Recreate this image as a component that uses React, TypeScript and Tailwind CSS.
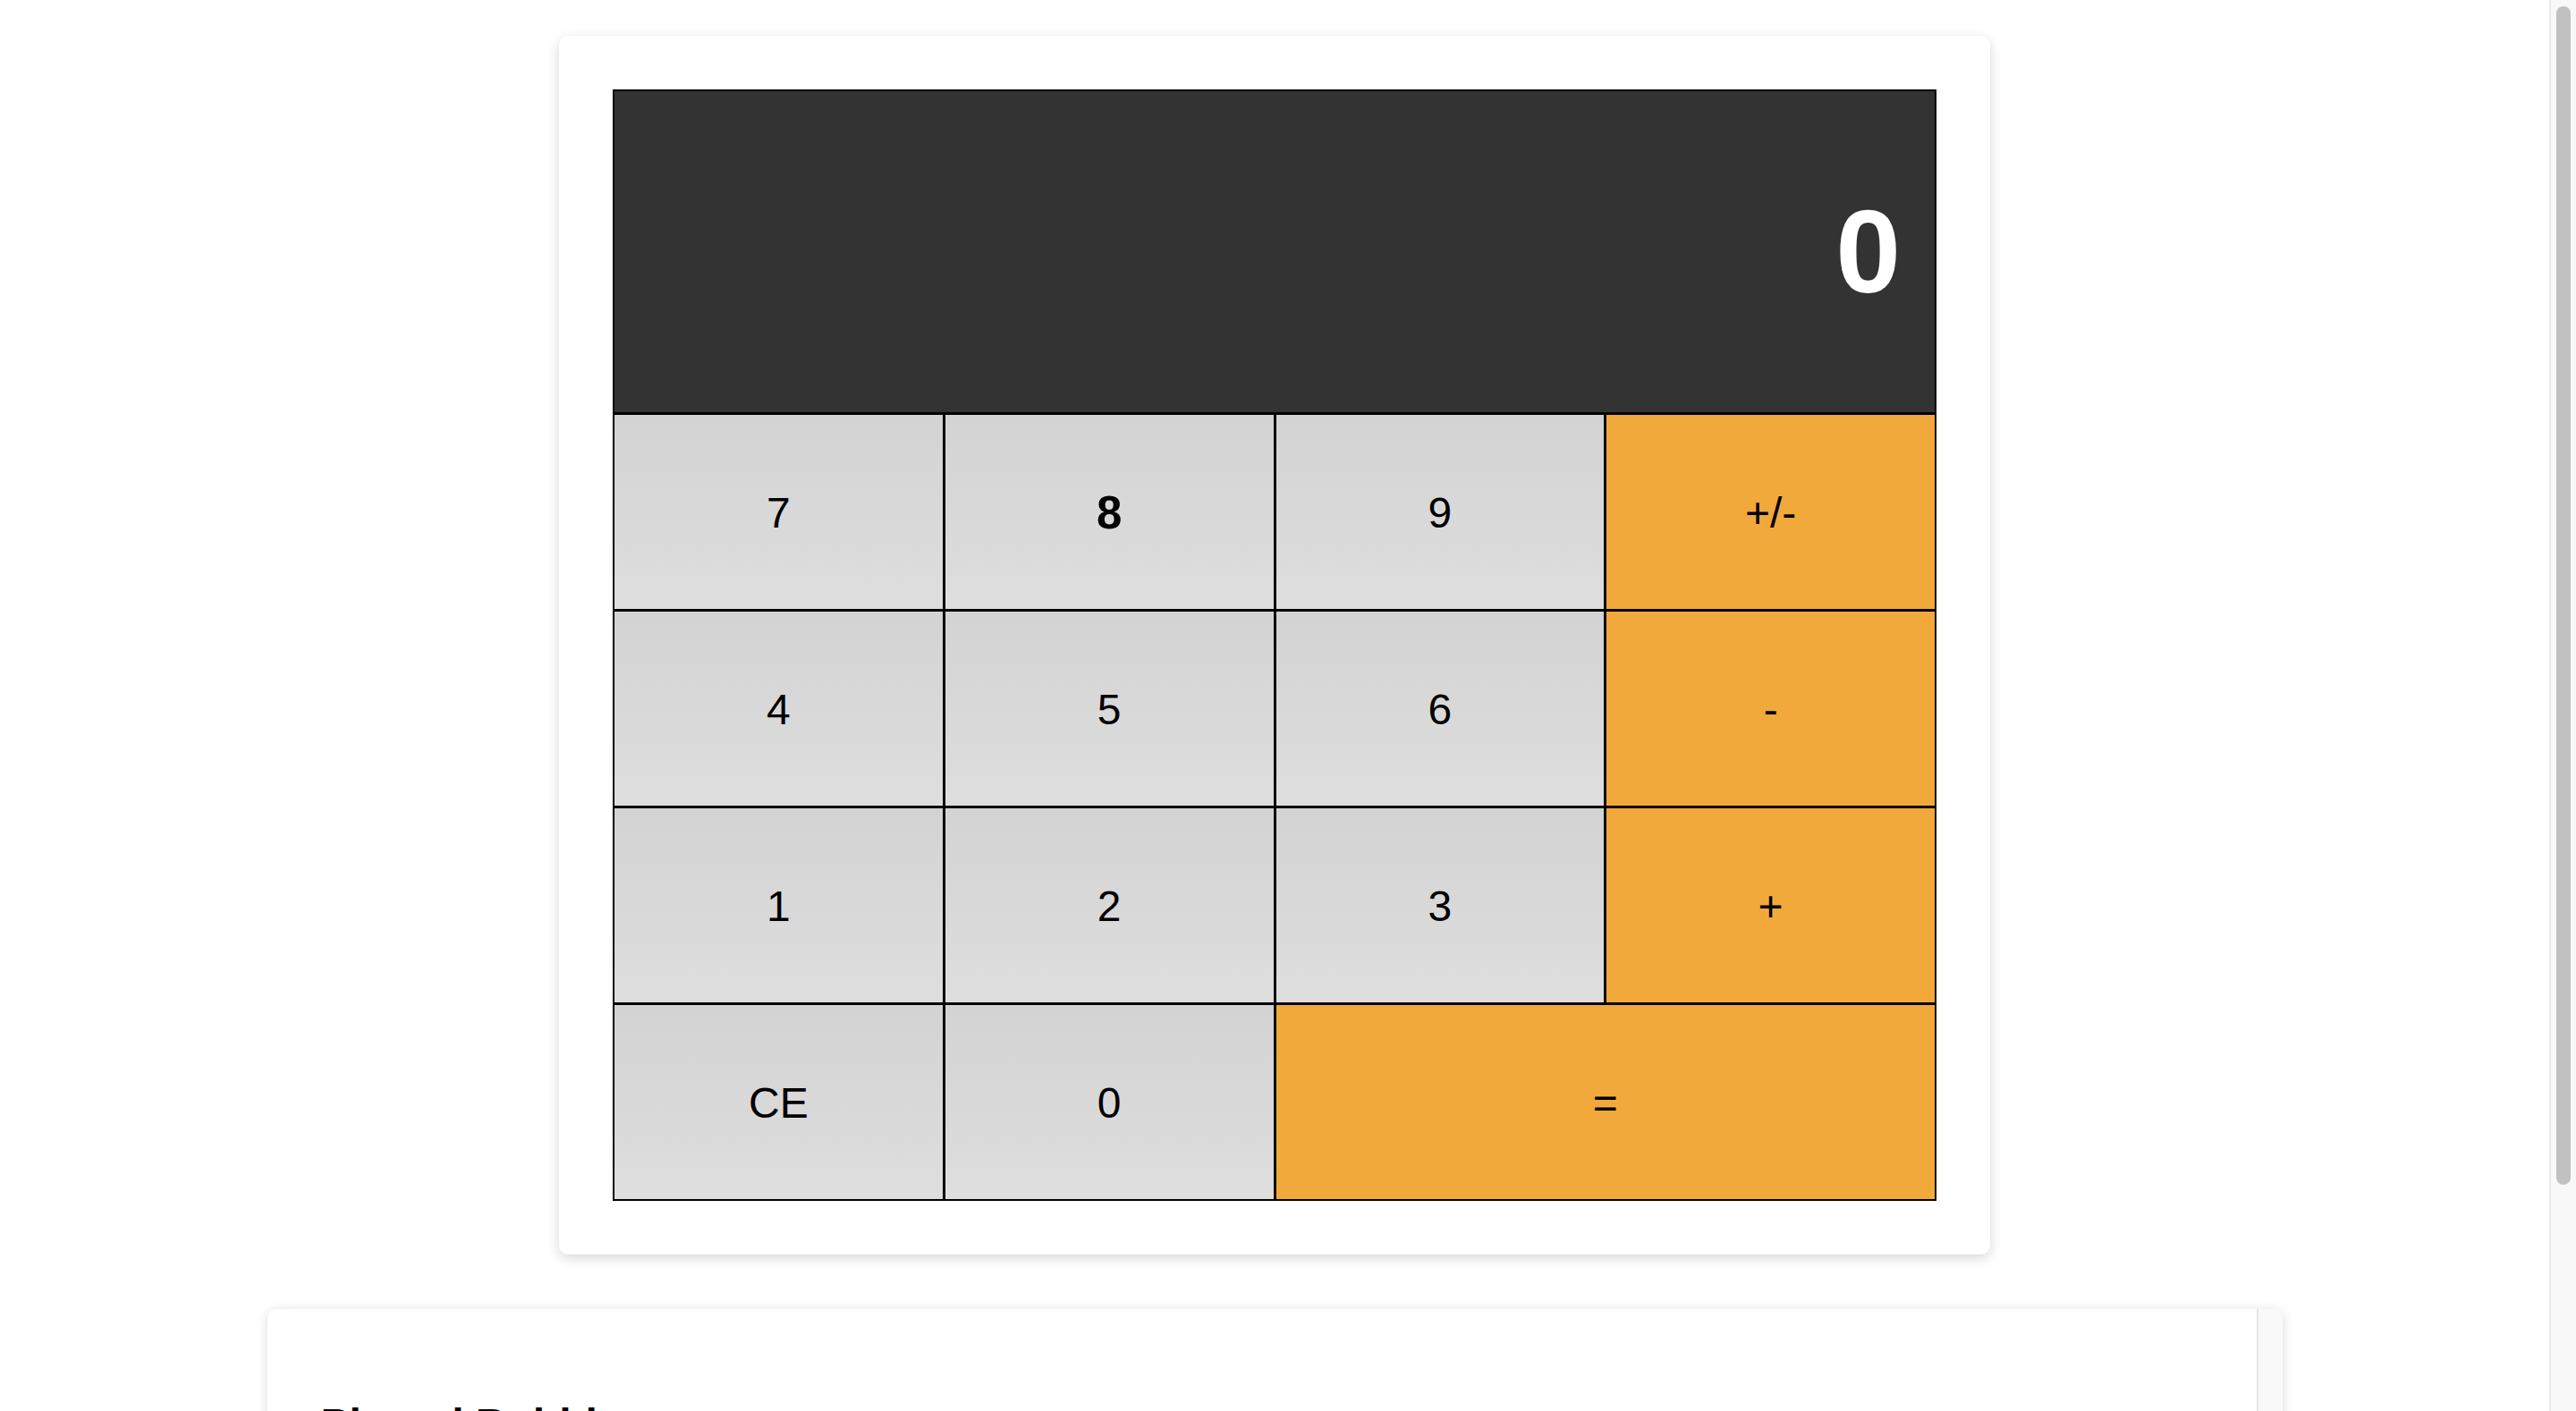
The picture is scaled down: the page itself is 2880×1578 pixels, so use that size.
const keys = [
  { label: '7' },
  { label: '8', bold: true },
  { label: '9' },
  { label: '+/-', orange: true },
  { label: '4' },
  { label: '5' },
  { label: '6' },
  { label: '-', orange: true },
  { label: '1' },
  { label: '2' },
  { label: '3' },
  { label: '+', orange: true },
  { label: 'CE' },
  { label: '0' },
  { label: '=', orange: true, wide: true },
]

function Key({ label, bold, orange, wide }: { label: string; bold?: boolean; orange?: boolean; wide?: boolean }) {
  return (
    <button
      className={
        'h-[217px] flex items-center justify-center pt-[3px] text-black ' +
        (bold ? 'font-bold text-[51px] ' : 'font-normal text-[48px] ') +
        (orange ? 'bg-[#f2a93c] ' : 'bg-linear-to-b from-[#d3d3d3] to-[#dedede] ') +
        (wide ? 'col-span-2' : '')
      }
    >
      {label}
    </button>
  )
}

export default function App() {
  return (
    <div className="flex h-screen w-full overflow-hidden bg-white font-['Liberation_Sans',Arial,sans-serif]">
      <main className="flex-1 flex flex-col items-center pt-[40px]">
        {/* Calculator card */}
        <div className="w-[1600px] p-[60px] bg-white rounded-[10px] shadow-[0_4px_14px_rgba(0,0,0,0.16)]">
          <div className="grid grid-cols-4 gap-[3px] p-[2px] bg-black">
            <div className="col-span-4 h-[359px] bg-[#333333] flex items-center justify-end pr-[38px]">
              <span className="text-white font-bold text-[131px] leading-none">0</span>
            </div>
            {keys.map(k => (
              <Key key={k.label} {...k} />
            ))}
          </div>
        </div>

        {/* Pinned section */}
        <div className="mt-[61px] w-[2253px] h-[600px] shrink-0 flex bg-white rounded-[10px] shadow-[0_2px_14px_rgba(0,0,0,0.14)] overflow-hidden">
          <div className="flex-1 pl-[60px] pt-[100px]">
            <h2 className="text-[48px] font-bold leading-[1.2] text-black">Pinned Bubbles</h2>
          </div>
          <div className="w-[29px] border-l-2 border-[#e6e6e6] bg-[#f9f9f9]" />
        </div>
      </main>

      {/* window scrollbar */}
      <div className="w-[30px] shrink-0 border-l-2 border-[#e8e8e8] bg-[#f8f8f8] flex flex-col">
        <div className="mx-auto mt-[7px] w-[16px] h-[1318px] rounded-full bg-[#c1c1c1]" />
      </div>
    </div>
  )
}
